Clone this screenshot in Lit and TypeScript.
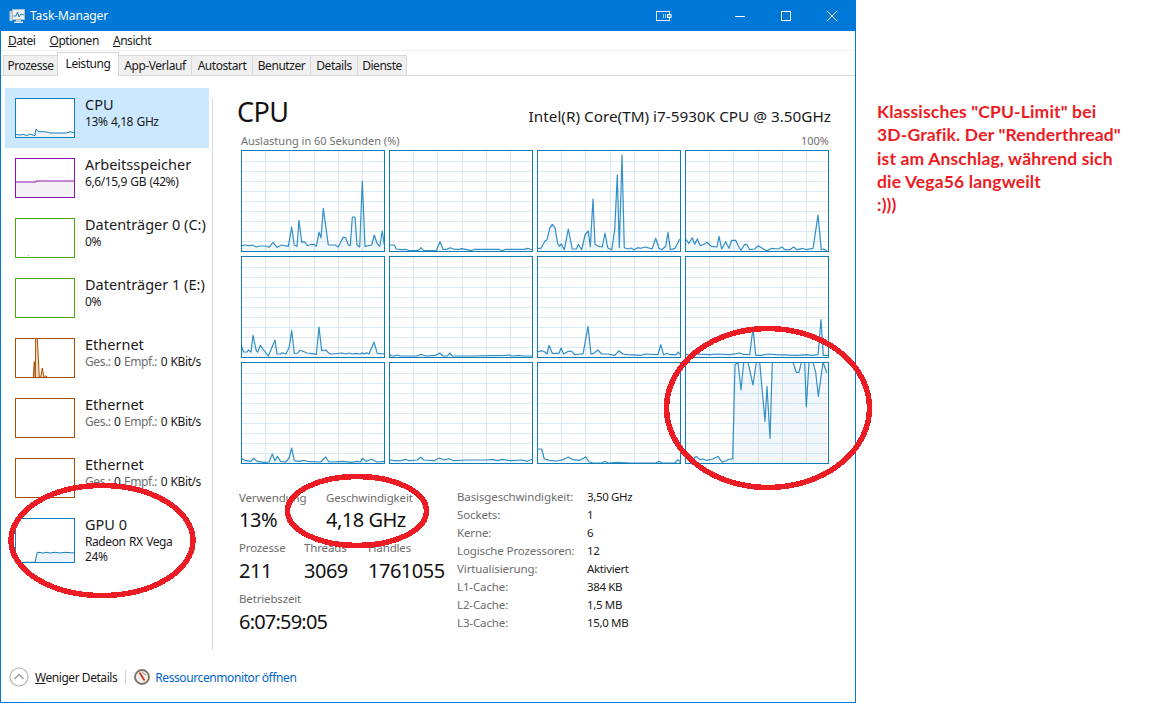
import { LitElement, html, css, svg } from "lit";
import { customElement } from "lit/decorators.js";

const CPU = "#117dbb";
type Pt = [number, number];
function parse(s: string, x0: number, y0: number): Pt[] {
  return s.trim().split(/\s+/).map((p) => {
    const [a, b] = p.split(",").map(Number);
    return [(a - x0) / 3, (b - y0) / 3] as Pt;
  });
}
const cells: { x0: number; y0: number; d: string }[] = [
  { x0: 16, y0: 15, d: "16,302 30,300 40,302 50,300 62,306 72,303 90,303 100,307 112,292 124,307 138,300 158,304 168,246 176,300 184,304 190,226 198,292 206,290 216,302 226,298 236,298 242,304 250,262 256,278 263,190 278,300 298,300 308,306 323,276 330,278 338,300 344,302 350,216 358,216 364,300 372,306 380,108 388,304 408,300 416,270 424,295 432,304 440,258 446,300" },
  { x0: 460, y0: 15, d: "460,300 476,300 482,312 498,314 510,313 520,317 548,317 556,308 564,317 602,317 613,290 622,313 634,313 644,308 656,313 670,313 678,311 690,313 706,317 716,313 790,313 800,317 810,313 866,313 876,310 890,315" },
  { x0: 22, y0: 15, d: "22,310 34,310 46,288 52,284 60,250 68,238 76,248 84,296 90,304 95,296 104,314 116,252 128,312 140,312 146,298 156,314 166,270 176,258 182,305 190,162 196,298 206,304 218,306 226,264 234,308 246,314 255,255 263,90 269,308 277,30 284,308 296,312 304,309 314,314 324,308 334,310 345,306 355,308 367,312 378,280 388,310 396,314 408,304 415,262 422,314 436,310 450,282" },
  { x0: 466, y0: 15, d: "466,280 478,295 488,278 495,298 503,282 512,302 522,298 532,292 545,304 562,306 568,274 576,312 588,290 598,310 606,286 618,286 626,302 634,316 645,298 652,299 660,314 675,312 685,302 698,310 708,316 716,316 726,310 745,312 757,306 765,314 780,314 792,306 802,314 820,310 830,314 850,310 865,210 875,314 882,312 892,318" },
  { x0: 16, y0: 334, d: "16,600 24,622 34,622 38,616 46,622 52,572 62,618 66,622 74,602 84,616 98,634 118,586 124,628 134,628 140,624 150,628 160,610 168,558 176,626 186,625 192,617 202,620 214,625 230,627 242,629 250,547 258,618 270,616 280,626 288,628 320,625 330,628 340,625 350,628 360,626 375,628 380,624 386,628 392,624 400,628 415,592 425,626 446,628" },
  { x0: 460, y0: 334, d: "460,625 466,634 476,634 484,631 494,634 545,634 556,629 570,634 600,632 612,625 622,634 635,634 642,625 650,634 700,634 810,632 820,631 830,634 850,632 860,634 890,634" },
  { x0: 22, y0: 334, d: "22,622 36,618 46,622 52,628 58,602 68,626 88,626 94,610 102,628 116,620 126,620 135,630 150,628 160,628 175,545 184,628 192,626 205,616 216,628 235,628 255,632 268,618 280,628 295,630 335,632 345,628 385,630 393,600 402,630 412,626 422,630 440,630 446,622 452,630" },
  { x0: 466, y0: 334, d: "466,628 480,632 500,628 540,630 560,628 600,630 630,625 640,629 660,630 670,550 678,632 695,632 715,628 740,630 800,632 830,630 850,632 865,630 874,525 881,632 895,632" },
  { x0: 16, y0: 22, d: "16,310 30,318 46,320 53,311 65,320 85,323 100,322 110,298 118,318 125,305 135,320 150,322 160,310 168,280 176,318 190,320 205,317 215,320 255,322 270,307 280,322 325,320 345,323 365,320 375,322 380,311 392,320 408,314 425,322 445,320" },
  { x0: 460, y0: 22, d: "460,315 475,318 495,318 510,314 520,318 545,316 555,308 565,316 595,318 610,310 625,316 640,312 655,318 690,316 750,316 770,314 785,318 800,314 825,318 860,316 875,320 890,314" },
  { x0: 22, y0: 127, d: "22,388 36,388 44,418 60,422 80,424 100,420 116,412 130,420 150,422 168,412 178,426 190,430 215,430 226,425 235,430 265,428 300,430 380,430 388,425 396,430 435,430 445,420 452,428" },
  { x0: 466, y0: 127, d: "466,412 480,420 490,418 500,410 510,420 520,418 530,422 550,418 565,410 578,428 600,418 609,418 616,135 625,128 634,210 642,128 655,128 670,196 680,128 690,128 706,305 712,200 721,356 728,128 790,128 800,158 808,158 815,128 825,128 830,262 838,128 850,128 858,158 866,230 880,128 892,160" },
];

const ptStr = (p: Pt[]) => p.map(([x, y]) => `${x.toFixed(1)},${y.toFixed(1)}`).join(" ");

function bigGraph(c: { x0: number; y0: number; d: string }) {
  const pts = parse(c.d, c.x0, c.y0);
  const W = 144, H = 102;
  const fill: Pt[] = [[pts[0][0], H], ...pts, [pts[pts.length - 1][0], H]];
  const vs = [24, 48, 73, 97, 121];
  const hs = [11, 21, 31, 41, 51, 61, 71, 81, 91];
  return html`<svg class="cell" width="144" height="102" viewBox="0 0 144 102">
    ${vs.map((x) => svg`<line x1=${x + 0.5} x2=${x + 0.5} y1="0" y2=${H} stroke="#d9eaf4"/>`)}
    ${hs.map((y) => svg`<line x1="0" x2=${W} y1=${y + 0.5} y2=${y + 0.5} stroke="#d9eaf4"/>`)}
    <polygon points=${ptStr(fill)} fill="#117dbb" fill-opacity="0.06"/>
    <polyline points=${ptStr(pts)} fill="none" stroke=${CPU} stroke-opacity="0.85" stroke-width="1.2" stroke-linejoin="round"/>
    <rect x="0.5" y="0.5" width="143" height="101" fill="none" stroke=${CPU}/>
  </svg>`;
}

function thumb(color: string, line: string, x0: number, y0: number, fillCol: string, h = 40) {
  const pts = line ? parse(line, x0, y0) : [];
  const fill: Pt[] = pts.length ? [[pts[0][0], h], ...pts, [pts[pts.length - 1][0], h]] : [];
  return html`<svg class="thumb" width="60" height=${h} viewBox="0 0 60 ${h}">
    ${pts.length ? svg`<polygon points=${ptStr(fill)} fill=${fillCol}/>
    <polyline points=${ptStr(pts)} fill="none" stroke=${color} stroke-width="1"/>` : ""}
    <rect x="0.5" y="0.5" width="59" height=${h - 1} fill="none" stroke=${color}/>
  </svg>`;
}

const net = html`<span class="g">Ges.:</span> 0 <span class="g">Empf.:</span> 0 KBit/s`;
const side = [
  { t: "CPU", s: [html`13% 4,18 GHz`], sel: true, g: thumb(CPU, "45,404 60,406 70,404 80,408 90,403 105,408 108,388 115,396 130,396 145,398 150,400 200,400 210,396 224,400", 45, 295, "#eef5fa") },
  { t: "Arbeitsspeicher", s: [html`6,6/15,9 GB (42%)`], g: thumb("#8b12ae", "45,97 108,97 108,94 224,94", 45, 25, "#f4f2f4") },
  { t: "Datenträger 0 (C:)", s: [html`0%`], g: thumb("#4da60c", "84,318 86,318", 45, 205, "#fff") },
  { t: "Datenträger 1 (E:)", s: [html`0%`], g: thumb("#4da60c", "", 0, 0, "#fff") },
  { t: "Ethernet", s: [net], g: thumb("#a74f01", "100,683 103,636 106,683 107,565 112,565 118,683 122,683 127,655 132,683 138,678 142,683", 45, 565, "#f3dcc6") },
  { t: "Ethernet", s: [net], g: thumb("#a74f01", "", 0, 0, "#fff") },
  { t: "Ethernet", s: [net], g: thumb("#a74f01", "", 0, 0, "#fff") },
  { t: "GPU 0", s: [html`Radeon RX Vega`, html`24%`], g: thumb(CPU, "45,548 105,548 112,518 130,520 140,518 150,520 165,518 180,520 195,518 224,520", 45, 415, "#eef5fa", 45) },
];

const tabs: [string, boolean][] = [["Prozesse", false], ["Leistung", true], ["App-Verlauf", false], ["Autostart", false], ["Benutzer", false], ["Details", false], ["Dienste", false]];
const info: [string, string][] = [
  ["Basisgeschwindigkeit:", "3,50 GHz"], ["Sockets:", "1"], ["Kerne:", "6"], ["Logische Prozessoren:", "12"],
  ["Virtualisierung:", "Aktiviert"], ["L1-Cache:", "384 KB"], ["L2-Cache:", "1,5 MB"], ["L3-Cache:", "15,0 MB"],
];

@customElement("app-root")
export class AppRoot extends LitElement {
  static styles = css`
    :host { display: flex; width: 1152px; height: 720px; position: relative; overflow: hidden; background: #fff; font-family: "Noto Sans", sans-serif; font-size: 12px; color: #1a1a1a; }
    svg { display: block; }
    .win { width: 856px; height: 703px; box-sizing: border-box; border: 1px solid #0078d7; border-top: 0; display: flex; flex-direction: column; flex: none; }
    .title { height: 31px; background: #0078d7; color: #fff; display: flex; align-items: center; margin: 0 -1px; padding: 0 1px 0 9px; flex: none; }
    .title .name { margin-left: 5px; font-size: 12px; letter-spacing: -0.1px; }
    .title .sp { flex: 1; }
    .tb { width: 46px; height: 31px; display: flex; align-items: center; justify-content: center; }
    .compact { margin-right: 30px; }
    .menu { height: 19px; display: flex; gap: 14px; padding-left: 7px; align-items: center; flex: none; letter-spacing: -0.45px; border-bottom: 1px solid #f0f0f0; }
    .tabs { height: 24px; display: flex; align-items: flex-end; padding-left: 2px; border-bottom: 1px solid #d9d9d9; flex: none; letter-spacing: -0.45px; }
    .tab { height: 20px; box-sizing: border-box; background: #f0f0f0; border: 1px solid #d9d9d9; border-bottom: 0; border-left: 0; display: flex; align-items: center; justify-content: center; }
    .tab:first-child { border-left: 1px solid #d9d9d9; }
    .tab.on { height: 24px; background: #fff; margin-bottom: -1px; padding-bottom: 2px; border-left: 1px solid #d9d9d9; margin-left: -1px; }
    .body { flex: 1; display: flex; min-height: 0; }
    .side { width: 207px; padding: 12px 0 0 4px; flex: none; }
    .row { width: 204px; height: 60px; display: flex; padding: 10px 0 0 10px; box-sizing: border-box; }
    .row.sel { background: #cce8ff; }
    .thumb { flex: none; background: #fff; }
    .rt { margin-left: 10px; white-space: nowrap; margin-top: -4px; }
    .rt .h { font-size: 14.5px; line-height: 20px; }
    .rt .s { font-size: 12px; line-height: 15px; letter-spacing: -0.42px; word-spacing: 0.8px; }
    .g { color: #6d6d6d; }
    .div { width: 1px; height: 552px; margin-top: 22px; background: #d9d9d9; flex: none; }
    .main { flex: 1; padding: 18px 0 0 25px; min-width: 0; }
    .hd { display: flex; justify-content: space-between; align-items: flex-end; height: 35px; padding-right: 24px; margin-left: -1px; }
    .hd .big { font-size: 27px; line-height: 35px; letter-spacing: -0.6px; color: #111; }
    .hd .cpu { font-size: 15.3px; line-height: 20px; padding-bottom: 3px; }
    .sub { display: flex; justify-content: space-between; font-size: 11px; color: #707070; height: 15px; line-height: 15px; margin: 4px 0 0 3px; width: 588px; }
    .grid { display: grid; grid-template-columns: repeat(4, 144px); grid-template-rows: repeat(3, 102px); gap: 4px; margin: 2px 0 0 3px; }
    .bottom { display: flex; margin: 26px 0 0 1px; }
    .stats { width: 218px; flex: none; }
    .srow { display: flex; height: 50px; }
    .srow.mid { height: 50px; }
    .srow.mid + .last { margin-top: 1px; }
    .st { flex: none; white-space: nowrap; }
    .st .l { font-size: 11.5px; line-height: 16px; color: #6d6d6d; letter-spacing: -0.15px; }
    .st .v { font-size: 20px; line-height: 27px; letter-spacing: -0.5px; color: #111; }
    .mid .v { margin-top: 1px; }
    .last .v { margin-top: 1px; letter-spacing: -0.8px; }
    .w87 { width: 87px; } .w65 { width: 65px; } .w64 { width: 64px; }
    .info { display: grid; grid-template-columns: 130px auto; grid-auto-rows: 18px; line-height: 18px; font-size: 11.5px; letter-spacing: -0.35px; align-content: start; margin-top: -2px; }
    .info .k { color: #6d6d6d; letter-spacing: -0.12px; }
    .foot { height: 50px; display: flex; align-items: center; padding-left: 8px; flex: none; letter-spacing: -0.45px; }
    .foot .wd { margin-left: 6px; }
    .foot .sep { width: 1px; height: 14px; background: #d0d0d0; margin: 0 8px; }
    .foot .lk { color: #0066cc; margin-left: 5px; letter-spacing: -0.4px; }
    .note { padding: 100px 0 0 21px; font-family: Lato, sans-serif; font-weight: 700; font-size: 17.5px; letter-spacing: 0.15px; line-height: 23.25px; color: #ed1c24; white-space: nowrap; font-variant-ligatures: none; }
    .ov { position: absolute; left: 0; top: 0; pointer-events: none; }
  `;

  render() {
    return html`
      <div class="win">
        <div class="title">
          <svg width="16" height="16" viewBox="0 0 16 16">
            <rect x="0.5" y="3" width="3" height="10" fill="#c8d4dc"/>
            <rect x="3.5" y="1.5" width="12" height="10" fill="#e8f2f8" stroke="#a9bcc8"/>
            <polyline points="4.5,8 7,8 8.5,4 10,9 12,6 15,7" fill="none" stroke="#2f7fb5"/>
            <rect x="7" y="12" width="5" height="1.5" fill="#c8d4dc"/><rect x="5" y="13.5" width="9" height="1.5" fill="#dfe6ea"/>
          </svg>
          <span class="name">Task-Manager</span>
          <span class="sp"></span>
          <div class="tb compact">
            <svg width="16" height="12" viewBox="0 0 16 12">
              <rect x="0.5" y="1.5" width="13" height="9" fill="#0078d7" stroke="#dfe9f3"/>
              <line x1="7.5" y1="4" x2="7.5" y2="8" stroke="#9cc4e8"/><line x1="9.5" y1="4" x2="9.5" y2="8" stroke="#9cc4e8"/>
              <rect x="11" y="4" width="4.5" height="4" fill="#fff"/><rect x="12" y="5" width="2.5" height="2" fill="#5b9fdc"/>
            </svg>
          </div>
          <div class="tb"><svg width="12" height="12" viewBox="0 0 12 12"><line x1="1" y1="6.5" x2="11" y2="6.5" stroke="#fff"/></svg></div>
          <div class="tb"><svg width="12" height="12" viewBox="0 0 12 12"><rect x="1.5" y="1.5" width="9" height="9" fill="none" stroke="#fff"/></svg></div>
          <div class="tb"><svg width="12" height="12" viewBox="0 0 12 12"><path d="M1 1L11 11M11 1L1 11" stroke="#fff" fill="none"/></svg></div>
        </div>
        <div class="menu"><span><u>D</u>atei</span><span><u>O</u>ptionen</span><span><u>A</u>nsicht</span></div>
        <div class="tabs">
          ${tabs.map(([t, on], i) => html`<div class=${on ? "tab on" : "tab"} style="width:${[55, 62, 73, 61, 58, 47, 49][i]}px">${t}</div>`)}
        </div>
        <div class="body">
          <div class="side">
            ${side.map((r) => html`<div class=${r.sel ? "row sel" : "row"}>
              ${r.g}
              <div class="rt"><div class="h">${r.t}</div>${r.s.map((x) => html`<div class="s">${x}</div>`)}</div>
            </div>`)}
          </div>
          <div class="div"></div>
          <div class="main">
            <div class="hd"><div class="big">CPU</div><div class="cpu">Intel(R) Core(TM) i7-5930K CPU @ 3.50GHz</div></div>
            <div class="sub"><span>Auslastung in 60 Sekunden (%)</span><span>100%</span></div>
            <div class="grid">${cells.map(bigGraph)}</div>
            <div class="bottom">
              <div class="stats">
                <div class="srow">
                  <div class="st w87"><div class="l">Verwendung</div><div class="v">13%</div></div>
                  <div class="st"><div class="l">Geschwindigkeit</div><div class="v">4,18 GHz</div></div>
                </div>
                <div class="srow mid">
                  <div class="st w65"><div class="l">Prozesse</div><div class="v">211</div></div>
                  <div class="st w64"><div class="l">Threads</div><div class="v">3069</div></div>
                  <div class="st"><div class="l">Handles</div><div class="v">1761055</div></div>
                </div>
                <div class="srow last">
                  <div class="st"><div class="l">Betriebszeit</div><div class="v">6:07:59:05</div></div>
                </div>
              </div>
              <div class="info">${info.map(([k, v]) => html`<div class="k">${k}</div><div>${v}</div>`)}</div>
            </div>
          </div>
        </div>
        <div class="foot">
          <svg width="20" height="20" viewBox="0 0 20 20"><circle cx="10" cy="10" r="9" fill="#fff" stroke="#b4b4b4" stroke-width="1.2"/><path d="M5.5 12L10 7.5L14.5 12" fill="none" stroke="#9a9a9a" stroke-width="1.4"/></svg>
          <span class="wd"><u>W</u>eniger Details</span>
          <span class="sep"></span>
          <svg width="16" height="16" viewBox="0 0 16 16"><circle cx="8" cy="8" r="7" fill="#f2efe8" stroke="#7d7468" stroke-width="1.8"/><path d="M5.5 3.5L10.5 11.5" stroke="#d8281c" stroke-width="1.6"/><path d="M8.5 3.5L12 6" stroke="#8a8a8a"/></svg>
          <span class="lk">Ressourcenmonitor öffnen</span>
        </div>
      </div>
      <div class="note">Klassisches "CPU-Limit" bei<br>3D-Grafik. Der "Renderthread"<br>ist am Anschlag, während sich<br>die Vega56 langweilt<br>:)))</div>
      <svg class="ov" width="1152" height="720" viewBox="0 0 1152 720" shape-rendering="crispEdges">
        <ellipse cx="102" cy="540.5" rx="91" ry="55" fill="none" stroke="#ed1c24" stroke-width="5.5"/>
        <ellipse cx="357" cy="511" rx="69.5" ry="34.5" fill="none" stroke="#ed1c24" stroke-width="5.5"/>
        <ellipse cx="768" cy="408" rx="101.5" ry="79.5" fill="none" stroke="#ed1c24" stroke-width="5.5"/>
      </svg>
    `;
  }
}
